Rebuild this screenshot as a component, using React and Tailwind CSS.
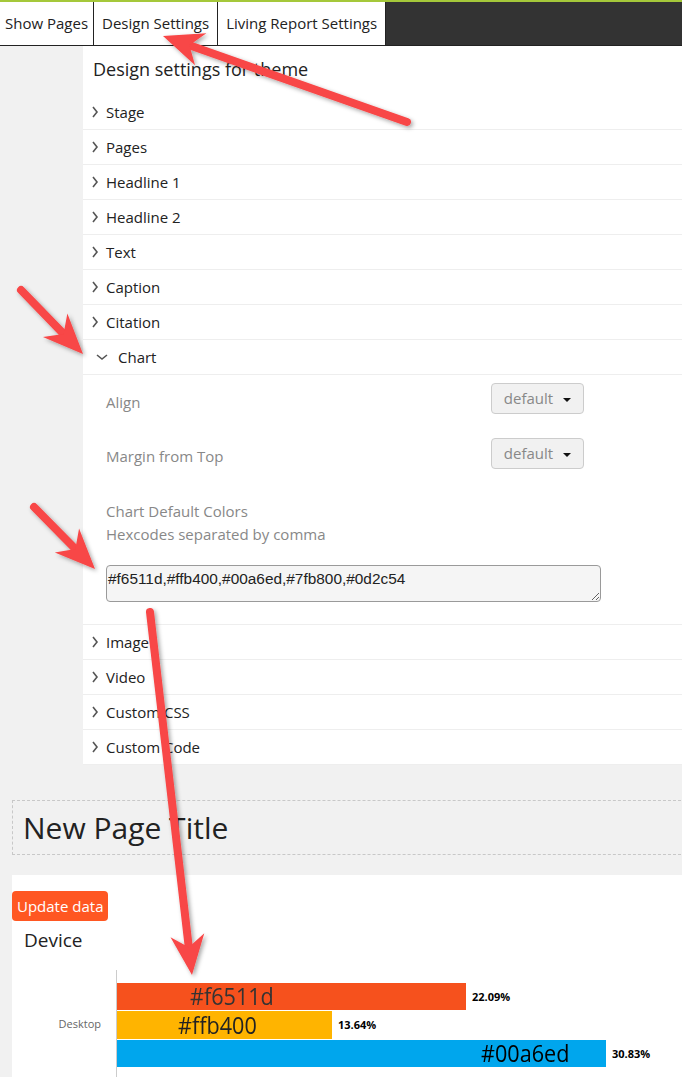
import React from "react";

const sections1 = ["Stage", "Pages", "Headline 1", "Headline 2", "Text", "Caption", "Citation"];
const sections2 = ["Image", "Video", "Custom CSS", "Custom Code"];

const ChevronRight = () => (
  <svg width="8" height="12" viewBox="0 0 8 12" className="shrink-0">
    <polyline points="2,1 6,6 2,11" fill="none" stroke="#555" strokeWidth="1.6" />
  </svg>
);

const ChevronDown = () => (
  <svg width="12" height="8" viewBox="0 0 12 8" className="shrink-0">
    <polyline points="1,2 6,6 11,2" fill="none" stroke="#555" strokeWidth="1.6" />
  </svg>
);

const Row = ({ label }) => (
  <div className="h-[35px] flex items-center gap-[7px] pl-[8px] border-b border-[#eeeeee] text-[15px] text-[#222]">
    <ChevronRight />
    <span>{label}</span>
  </div>
);

const Dropdown = () => (
  <div className="w-[93px] h-[31px] flex items-center justify-center gap-[10px] bg-[#f1f1f1] border border-[#cccccc] rounded-sm text-[15px] text-[#888]">
    <span>default</span>
    <svg width="8" height="5" viewBox="0 0 8 5" className="mt-[4px]">
      <polygon points="0,0 8,0 4,4" fill="#111" />
    </svg>
  </div>
);

// red annotation arrow drawn over the page
const Arrow = ({ from, to, head = 36, half = 17 }) => {
  const dx = to[0] - from[0];
  const dy = to[1] - from[1];
  const len = Math.sqrt(dx * dx + dy * dy);
  const ux = dx / len;
  const uy = dy / len;
  const nx = -uy;
  const ny = ux;
  const bx = to[0] - ux * head;
  const by = to[1] - uy * head;
  const neckX = to[0] - ux * (head - 8);
  const neckY = to[1] - uy * (head - 8);
  const pts = [
    [to[0], to[1]],
    [bx + nx * half - ux * 4, by + ny * half - uy * 4],
    [neckX, neckY],
    [bx - nx * half - ux * 4, by - ny * half - uy * 4],
  ]
    .map((p) => p.join(","))
    .join(" ");
  return (
    <g filter="url(#shadow)">
      <line x1={from[0]} y1={from[1]} x2={neckX} y2={neckY} stroke="#f84646" strokeWidth="8" strokeLinecap="round" />
      <polygon points={pts} fill="#f84646" />
    </g>
  );
};

const Bar = ({ width, height, color, pad, label, textColor, pct }) => (
  <div className="flex items-center">
    <div className={`${width} ${height} ${color} ${pad} flex items-center`}>
      <span className={`inline-block leading-none text-[24px] scale-x-[0.9] origin-left ${textColor}`}>{label}</span>
    </div>
    <span className="ml-[6px] text-[11px] leading-none font-bold text-black">{pct}</span>
  </div>
);

export default function App() {
  return (
    <div className="relative w-[682px] h-[1077px] overflow-hidden bg-[#f1f1f1] font-['Open_Sans',sans-serif]">
      {/* ===== Tabs ===== */}
      <div className="h-[46px] flex border-t-2 border-[#a5c83a] border-b border-b-[#222] bg-[#333]">
        <div className="px-[5px] flex items-center bg-white border-r border-[#222] text-[15px] text-[#222]">Show Pages</div>
        <div className="px-[8px] flex items-center bg-white border-r border-[#222] text-[15px] text-[#222]">Design Settings</div>
        <div className="px-[8px] flex items-center bg-white border-r border-[#222] text-[15px] text-[#222]">Living Report Settings</div>
      </div>

      {/* ===== Settings panel ===== */}
      <div className="flex">
        <div className="w-[83px] shrink-0" />
        <div className="flex-1 bg-white">
          <div className="h-[49px] pl-[10px] pt-[10px] text-[18px] text-[#222]">Design settings for theme</div>
          {sections1.map((s) => (
            <Row key={s} label={s} />
          ))}
          <div className="h-[35px] flex items-center gap-[10px] pl-[13px] border-b border-[#eeeeee] text-[15px] text-[#222]">
            <ChevronDown />
            <span>Chart</span>
          </div>
          <div className="pl-[23px] pt-[8px] pb-[22px] border-b border-[#eeeeee] text-[15px] text-[#888]">
            <div className="flex items-center">
              <span className="w-[385px] pt-[7px]">Align</span>
              <Dropdown />
            </div>
            <div className="flex items-center mt-[24px]">
              <span className="w-[385px] pt-[6px]">Margin from Top</span>
              <Dropdown />
            </div>
            <div className="mt-[31px] leading-[23px]">
              <div>Chart Default Colors</div>
              <div>Hexcodes separated by comma</div>
            </div>
            <textarea
              readOnly
              rows={1}
              defaultValue="#f6511d,#ffb400,#00a6ed,#7fb800,#0d2c54"
              className="block mt-[19px] w-[495px] h-[37px] px-[1px] py-[3px] bg-[#f5f5f5] border border-[#9a9a9a] rounded-sm text-[15.4px] leading-[20px] text-[#222] font-['Liberation_Sans',sans-serif] outline-none resize-y"
            />
          </div>
          {sections2.map((s) => (
            <Row key={s} label={s} />
          ))}
        </div>
      </div>

      {/* ===== Page title ===== */}
      <div className="pl-[12px] pt-[35px]">
        <div className="h-[55px] -mr-1 flex items-center pl-[10px] border border-dashed border-[#c8c8c8] text-[30px] text-[#222]">
          New Page Title
        </div>
      </div>

      {/* ===== Chart block ===== */}
      <div className="ml-[12px] mt-[20px] bg-white h-[300px] pt-[16px]">
        <button className="h-[30px] px-[5px] bg-[#ff5722] rounded-sm text-white text-[15px]">Update data</button>
        <div className="pl-[12px] pt-[5px] text-[19px] text-[#222]">Device</div>
        <div className="flex mt-[15px]">
          <div className="w-[104px] pt-[40px] pr-[15px] flex justify-end">
            <div className="h-[30px] flex items-center text-[11px] text-[#666]">Desktop</div>
          </div>
          <div className="flex flex-col gap-[1px] border-l border-[#cccccc] pt-[13px] h-[110px]">
            <Bar width="w-[349px]" height="h-[27px]" color="bg-[#f6511d]" pad="pl-[73px]" label="#f6511d" textColor="text-[#333]" pct="22.09%" />
            <Bar width="w-[215px]" height="h-[28px]" color="bg-[#ffb400]" pad="pl-[61px]" label="#ffb400" textColor="text-[#222]" pct="13.64%" />
            <Bar width="w-[489px]" height="h-[27px]" color="bg-[#00a6ed]" pad="pl-[364px]" label="#00a6ed" textColor="text-black" pct="30.83%" />
          </div>
        </div>
      </div>

      {/* ===== Annotation arrows ===== */}
      <svg className="absolute inset-0 pointer-events-none" width="682" height="1077">
        <defs>
          <filter id="shadow" x="-20%" y="-20%" width="140%" height="140%">
            <feDropShadow dx="2" dy="2" stdDeviation="2" floodColor="#000" floodOpacity="0.35" />
          </filter>
        </defs>
        <Arrow from={[407, 122]} to={[163, 36]} />
        <Arrow from={[21, 290]} to={[83, 354]} />
        <Arrow from={[34, 507]} to={[95, 569]} />
        <Arrow from={[150, 612]} to={[192, 975]} />
      </svg>
    </div>
  );
}
